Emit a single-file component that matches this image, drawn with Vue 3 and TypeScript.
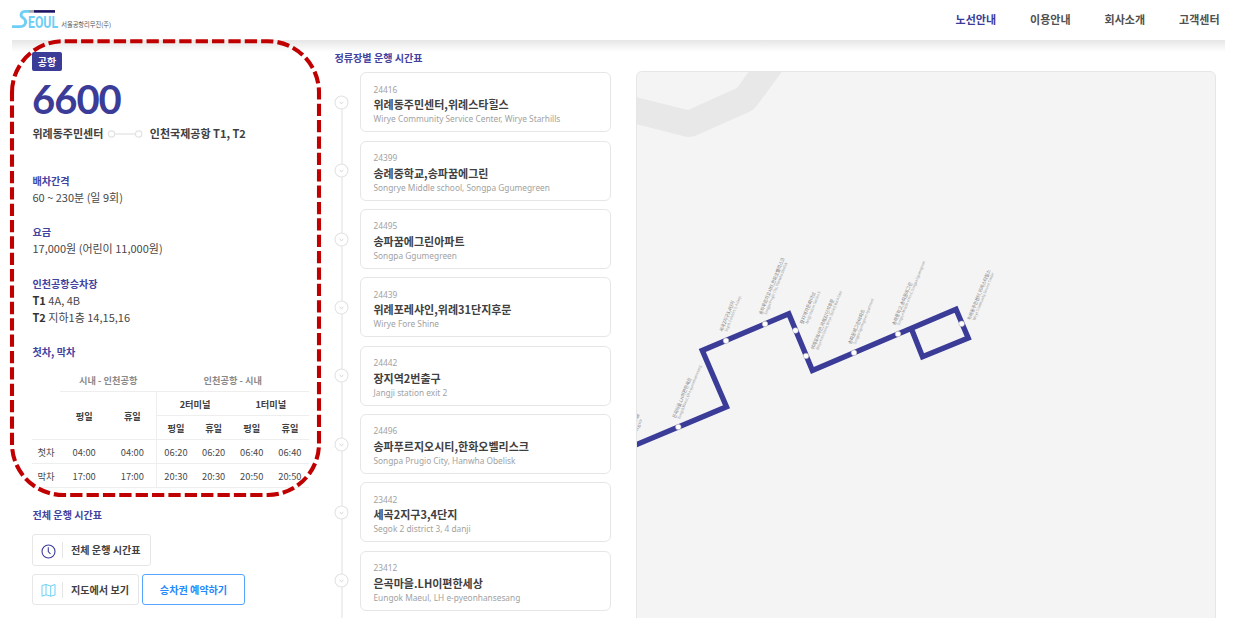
<script setup lang="ts">
interface Stop {
  id: string
  name: string
  en: string
}

interface MapLabel {
  x: number
  y: number
  text: string
  len: number
  ex: number
  ey: number
  en: string
  enLen: number
}

const menu: string[] = ['노선안내', '이용안내', '회사소개', '고객센터']

const stops: Stop[] = [
  { id: '24416', name: '위례동주민센터,위례스타힐스', en: 'Wirye Community Service Center, Wirye Starhills' },
  { id: '24399', name: '송례중학교,송파꿈에그린', en: 'Songrye Middle school, Songpa Ggumegreen' },
  { id: '24495', name: '송파꿈에그린아파트', en: 'Songpa Ggumegreen' },
  { id: '24439', name: '위례포레샤인,위례31단지후문', en: 'Wirye Fore Shine' },
  { id: '24442', name: '장지역2번출구', en: 'Jangji station exit 2' },
  { id: '24496', name: '송파푸르지오시티,한화오벨리스크', en: 'Songpa Prugio City, Hanwha Obelisk' },
  { id: '23442', name: '세곡2지구3,4단지', en: 'Segok 2 district 3, 4 danji' },
  { id: '23412', name: '은곡마을.LH이편한세상', en: 'Eungok Maeul, LH e-pyeonhansesang' },
]

const times: { label: string; cells: string[] }[] = [
  { label: '첫차', cells: ['04:00', '04:00', '06:20', '06:20', '06:40', '06:40'] },
  { label: '막차', cells: ['17:00', '17:00', '20:30', '20:30', '20:50', '20:50'] },
]

const points: [number, number][] = [
  [678.3, 427], [726, 340.7], [765, 324], [795.5, 330.5],
  [806, 356], [854, 352.7], [898, 334], [961.7, 323.7],
]

const labels: MapLabel[] = [
  { x: 675.5, y: 418.5, text: '은곡마을.LH이편한세상', len: 43, ex: 680, ey: 419, en: 'Eungok Maeul, LH e-pyeonhansesang', enLen: 57 },
  { x: 722.5, y: 332, text: '세곡2지구3,4단지', len: 33, ex: 727, ey: 332, en: 'Segok 2 district 3, 4 danji', enLen: 38 },
  { x: 762, y: 315, text: '송파푸르지오시티,한화오벨리스크', len: 61, ex: 766.5, ey: 315, en: 'Songpa Prugio City, Hanwha Obelisk', enLen: 56 },
  { x: 803, y: 324.5, text: '장지역가든파이브', len: 34, ex: 807.5, ey: 324.5, en: 'Jangji station Garden 5', enLen: 35 },
  { x: 814, y: 350, text: '위례포레샤인,위례31단지후문', len: 54, ex: 818.5, ey: 350, en: 'Wirye Fore Shine, Wirye 31danji Back Gate', enLen: 63 },
  { x: 851.2, y: 344.5, text: '송파꿈에그린아파트', len: 37, ex: 855.7, ey: 344.5, en: 'Songpa Ggumegreen Apartment', enLen: 49 },
  { x: 895.2, y: 325.5, text: '송례중학교,송파꿈에그린', len: 46, ex: 899.5, ey: 325.5, en: 'Songrye Middle school, Songpa Ggumegreen', enLen: 69 },
  { x: 970.5, y: 320.5, text: '위례동주민센터,위례스타힐스', len: 54, ex: 975, ey: 320.5, en: 'Wirye Community Service Center', enLen: 51 },
  { x: 623, y: 455, text: '세곡푸르지오마을', len: 44, ex: 628, ey: 455, en: 'Segok Prugio', enLen: 38 },
]

const turn = (x: number, y: number): string => `rotate(-68 ${x} ${y})`
</script>

<template>
  <div class="page">
    <header class="top">
      <svg class="logo" width="102" height="28" viewBox="10 6 102 28">
        <path d="M12 26.6H19.5C26.5 26.6 27 20.6 23.5 18.2C19.5 15.6 20.5 11.4 26 11.4H29.5" fill="none" stroke="#6dcff6" stroke-width="2.8" />
        <path d="M29 11.4H34" stroke="#a5a5a8" stroke-width="2.6" />
        <path d="M34 11.4H55" stroke="#1b1464" stroke-width="2.6" />
        <text x="28" y="27.7" class="logo-en" textLength="30" lengthAdjust="spacingAndGlyphs">EOUL</text>
        <text x="61.2" y="27" class="logo-ko" textLength="50" lengthAdjust="spacingAndGlyphs">서울공항리무진(주)</text>
      </svg>
      <nav class="menu">
        <a v-for="(m, i) in menu" :key="m" :class="{ on: i === 0 }">{{ m }}</a>
      </nav>
    </header>
    <div class="shade"></div>

    <main class="body">
      <section class="info">
        <span class="badge">공항</span>
        <div class="number">6600</div>
        <div class="route">
          <span>위례동주민센터</span>
          <svg width="36" height="10" viewBox="0 0 36 10" fill="#fff" stroke="#e2e2e2" stroke-width="1.2">
            <path d="M7.5 5H28.5" />
            <circle cx="4.5" cy="5" r="3.2" />
            <circle cx="31.7" cy="5" r="3.2" />
          </svg>
          <span>인천국제공항 T1, T2</span>
        </div>

        <dl class="facts">
          <dt>배차간격</dt>
          <dd>60 ~ 230분 (일 9회)</dd>
          <dt>요금</dt>
          <dd>17,000원 (어린이 11,000원)</dd>
          <dt>인천공항승차장</dt>
          <dd><b>T1</b> 4A, 4B</dd>
          <dd class="next"><b>T2</b> 지하1층 14,15,16</dd>
          <dt>첫차, 막차</dt>
        </dl>

        <table class="times">
          <colgroup>
            <col class="c0" /><col class="c1" /><col class="c1" />
            <col class="c2" /><col class="c2" /><col class="c2" /><col class="c2" />
          </colgroup>
          <thead>
            <tr class="dir">
              <td></td>
              <th colspan="2">시내 - 인천공항</th>
              <th colspan="4">인천공항 - 시내</th>
            </tr>
            <tr>
              <td rowspan="2"></td>
              <th rowspan="2" class="line">평일</th>
              <th rowspan="2" class="line">휴일</th>
              <th colspan="2" class="line split">2터미널</th>
              <th colspan="2" class="line">1터미널</th>
            </tr>
            <tr>
              <th class="line split">평일</th>
              <th class="line">휴일</th>
              <th class="line">평일</th>
              <th class="line">휴일</th>
            </tr>
          </thead>
          <tbody>
            <tr v-for="row in times" :key="row.label">
              <td class="line">{{ row.label }}</td>
              <td v-for="(c, i) in row.cells" :key="i" class="line" :class="{ split: i === 2 }">{{ c }}</td>
            </tr>
          </tbody>
        </table>

        <h2 class="all">전체 운행 시간표</h2>
        <div class="buttons">
          <a class="btn full">
            <svg width="15" height="15" viewBox="0 0 15 15" fill="none" stroke="#3b3b9a" stroke-width="1.1">
              <circle cx="7.5" cy="7.5" r="6.5" />
              <path d="M7.3 3.3V7.5L9.5 10" />
            </svg>
            <span>전체 운행 시간표</span>
          </a>
          <a class="btn where">
            <svg width="15" height="15" viewBox="0 0 15 15" fill="none" stroke="#6dcff6" stroke-width="1">
              <path d="M1 2.5L5 1.5L9.7 3L14 1.5V12L9.7 13.2L5 11.8L1 13.2ZM5 1.5V11.8M9.7 3V13.2" />
            </svg>
            <span>지도에서 보기</span>
          </a>
          <a class="btn book">승차권 예약하기</a>
        </div>
      </section>

      <section class="stops">
        <h2>정류장별 운행 시간표</h2>
        <ol>
          <li v-for="s in stops" :key="s.id">
            <svg class="dot" width="15" height="15" viewBox="0 0 15 15" fill="none" stroke="#e3e3e3" stroke-width="1.1">
              <circle cx="7.5" cy="7.5" r="6.5" fill="#fff" />
              <path d="M5.7 7.2L7.5 8.6L9.3 7.2" stroke="#ccc" stroke-width="0.9" />
            </svg>
            <div class="card">
              <div class="id">{{ s.id }}</div>
              <div class="name">{{ s.name }}</div>
              <div class="en">{{ s.en }}</div>
            </div>
          </li>
        </ol>
      </section>

      <section class="map">
        <svg width="578" height="547" viewBox="637 72 578 547">
          <path d="M636 97L688 110L737 88L750 70H783L757 105.5Q754 109.5 750 111.5L696 135.5Q690 138 684 136.2L636 124Z" fill="#e8e8e8" />
          <path d="M630 447.3L726.5 406.8L702.3 350.5L788.8 313.8L812.4 370.5L956 309.3L968.2 338L922.5 356.8L911.5 329" fill="none" stroke="#3b3b98" stroke-width="5.4" />
          <circle v-for="(p, i) in points" :key="i" :cx="p[0]" :cy="p[1]" r="2.8" fill="#fff" stroke="#aaa" stroke-width="0.5" />
          <g v-for="l in labels" :key="l.text">
            <text :x="l.x" :y="l.y" :textLength="l.len" lengthAdjust="spacingAndGlyphs" :transform="turn(l.x, l.y)" class="ko-label">{{ l.text }}</text>
            <text :x="l.ex" :y="l.ey" :textLength="l.enLen" lengthAdjust="spacingAndGlyphs" :transform="turn(l.ex, l.ey)" class="en-label">{{ l.en }}</text>
          </g>
        </svg>
      </section>
    </main>

    <svg class="marker" width="330" height="500" viewBox="0 0 330 500">
      <path d="M12 92.5A51.3 51.3 0 0 1 63.3 41.2H267.7A51.3 51.3 0 0 1 319 92.5V443.7A51.3 51.3 0 0 1 267.7 495H63.3A51.3 51.3 0 0 1 12 443.7Z" fill="none" stroke="#c00000" stroke-width="4.1" stroke-dasharray="12.28 4.09" />
    </svg>
  </div>
</template>

<style scoped>
.page {
  position: relative;
  width: 1242px;
  height: 632px;
  overflow: hidden;
  background: #fff;
  color: #484848;
  font-family: "Noto Sans CJK KR", sans-serif;
  font-size: 11px;
}
.top {
  display: flex;
  justify-content: space-between;
  height: 40px;
  padding: 0 22.5px 0 10px;
}
.logo {
  margin-top: 6px;
}
.logo-en {
  font: 700 16.5px Roboto, sans-serif;
  fill: #6dcff6;
}
.logo-ko {
  font-size: 6.3px;
  fill: #555;
}
.menu {
  display: flex;
  gap: 34px;
  color: #505050;
  line-height: 38px;
  font-weight: 700;
}
.menu .on {
  color: #3b3b98;
}
.shade {
  height: 12px;
  margin: 0 17px 0 12px;
  background: linear-gradient(#e6e6e6, #fff);
}
.body {
  display: grid;
  grid-template-columns: 302.5px 301.5px 580px;
  height: 568px;
  margin-top: -2px;
  padding-left: 32px;
  overflow: hidden;
}
.info {
  display: flex;
  flex-direction: column;
  align-items: flex-start;
  padding-top: 2px;
}
.badge {
  width: 30px;
  height: 19px;
  border-radius: 2px;
  background: #3b3b98;
  color: #fff;
  font-size: 10px;
  font-weight: 700;
  line-height: 20px;
  text-align: center;
}
.number {
  height: 44px;
  margin-top: 6px;
  color: #3b3b98;
  font: 700 40px/44px Lato, sans-serif;
  letter-spacing: -1px;
}
.route {
  display: flex;
  align-items: center;
  height: 16px;
  margin: 4px 0 0 0.5px;
  color: #404040;
  font-weight: 700;
  white-space: nowrap;
}
.route svg {
  margin: 2px 6.5px 0 4px;
}
.facts {
  height: 204px;
  margin: 32px 0 0 0.5px;
  white-space: nowrap;
}
dt, dd, h2 {
  margin: 0;
  height: 16px;
  line-height: 16px;
}
dt, h2 {
  color: #4242a0;
  font-size: 10.1px;
  font-weight: 700;
}
dd + dt {
  margin-top: 19.4px;
}
dd.next {
  margin-top: 1px;
}
dd b {
  color: #333;
}
.times {
  width: 277px;
  margin-top: -8px;
  border-collapse: separate;
  border-spacing: 0;
  table-layout: fixed;
  font-size: 9.3px;
  line-height: 14px;
  text-align: center;
}
.c0 { width: 28px; }
.c1 { width: 48px; }
.c2 { width: 38px; }
.times th,
.times td {
  box-sizing: border-box;
  height: 24px;
  padding: 1px 0 0;
  font-weight: 400;
}
.times th {
  color: #404040;
  font-weight: 700;
  font-size: 9.2px;
}
.times .dir td,
.times .dir th {
  height: 23px;
  padding: 0 0 1px;
}
.times .dir th {
  border-bottom: 1px solid #eee;
  color: #888;
}
.times .line {
  border-bottom: 1px solid #eee;
}
.times thead td {
  border-bottom: 1px solid #eee;
}
.times .dir td {
  border-bottom: 0;
}
.times .split,
.times tbody .split {
  border-left: 1px solid #eee;
}
.all {
  margin: 18.5px 0 0 0.5px;
}
.buttons {
  display: flex;
  flex-wrap: wrap;
  gap: 8px 3px;
  margin-top: 11.5px;
}
.btn {
  box-sizing: border-box;
  display: flex;
  align-items: center;
  height: 31px;
  border: 1px solid #e6e6e6;
  border-radius: 3px;
  color: #404040;
  font-size: 10.1px;
  font-weight: 700;
  white-space: nowrap;
}
.btn svg {
  margin: 2px 6px 0 8px;
}
.btn span {
  padding-left: 8px;
  border-left: 1px solid #e6e6e6;
  line-height: 16px;
}
.full {
  width: 119px;
  height: 32px;
  margin-right: 100px;
}
.where {
  width: 107px;
}
.book {
  width: 103px;
  justify-content: center;
  border-color: #55a5ff;
  color: #2488ff;
}
.stops ol {
  position: relative;
  margin: 6.4px 0 0;
  padding: 0;
  list-style: none;
}
.stops ol::before {
  position: absolute;
  top: 30px;
  left: 6.5px;
  width: 2px;
  height: 530px;
  background: #efefef;
  content: "";
}
.stops li {
  position: relative;
  display: flex;
  align-items: center;
  gap: 11px;
  height: 60px;
  margin-bottom: 8.33px;
}
.dot {
  margin-left: -0.5px;
}
.card {
  box-sizing: border-box;
  width: 251px;
  height: 60px;
  padding: 10.2px 12.5px 0;
  border: 1px solid #e6e6e6;
  border-radius: 6px;
  white-space: nowrap;
}
.id, .en {
  height: 12px;
  color: #a2a2a2;
  font: 8.32px/12px "Noto Sans", "Noto Sans CJK KR", sans-serif;
}
.name {
  height: 16px;
  margin: 0.7px 0 1px;
  color: #404040;
  font-weight: 700;
  line-height: 16px;
}
.map {
  box-sizing: border-box;
  width: 580px;
  height: 560px;
  margin-top: 21px;
  overflow: hidden;
  border: 1px solid #e6e6e6;
  border-radius: 6px;
  background: #f4f4f4;
}
.map svg {
  display: block;
}
.ko-label {
  font-size: 4.8px;
  fill: #777;
}
.en-label {
  font-size: 3.8px;
  fill: #999;
}
.marker {
  position: absolute;
  top: 0;
  left: 0;
  pointer-events: none;
}
</style>

<style>
body {
  margin: 0;
  background: #fff;
}
</style>
